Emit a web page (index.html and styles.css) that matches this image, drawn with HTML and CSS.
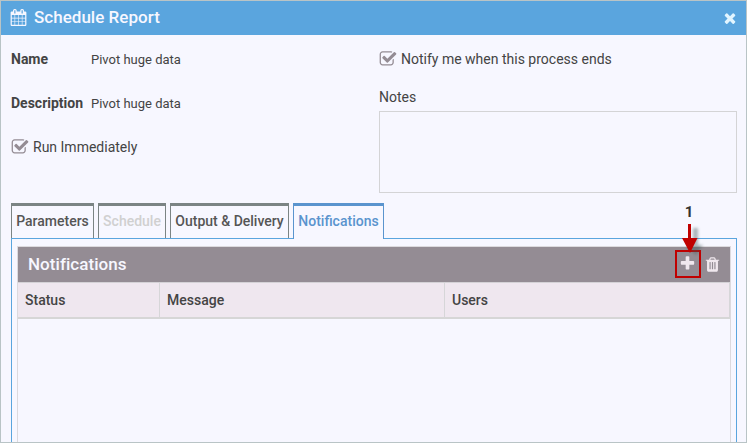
FILE: index.html
```html
<!DOCTYPE html>
<html lang="en">
<head>
<meta charset="utf-8">
<title>Schedule Report</title>
<link rel="stylesheet" href="styles.css">
</head>
<body>
<svg class="sprite" aria-hidden="true">
  <symbol id="check" viewBox="0 0 1792 1792"><path d="M1472 930v318q0 119-84.500 203.500t-203.500 84.500h-832q-119 0-203.500-84.500t-84.500-203.500v-832q0-119 84.500-203.500t203.500-84.500h832q63 0 117 25 15 7 18 23 3 17-9 29l-49 49q-10 10-23 10-3 0-9-2-23-6-45-6h-832q-66 0-113 47t-47 113v832q0 66 47 113t113 47h832q66 0 113-47t47-113v-254q0-13 9-22l64-64q10-10 23-10 6 0 12 3 20 8 20 29zm231-489l-814 814q-24 24-57 24t-57-24l-430-430q-24-24-24-57t24-57l110-110q24-24 57-24t57 24l263 263 647-647q24-24 57-24t57 24l110 110q24 24 24 57t-24 57z"/></symbol>
</svg>
<main class="dialog">
  <header class="titlebar">
    <svg class="icon-calendar" viewBox="0 0 1792 1792"><path d="M192 1664h288v-288h-288v288zm352 0h320v-288h-320v288zm-352-352h288v-320h-288v320zm352 0h320v-320h-320v320zm-352-384h288v-288h-288v288zm736 736h320v-288h-320v288zm-384-736h320v-288h-320v288zm768 736h288v-288h-288v288zm-384-352h320v-320h-320v320zm-352-864v-288q0-13-9.500-22.500t-22.500-9.500h-64q-13 0-22.500 9.500t-9.500 22.500v288q0 13 9.500 22.500t22.500 9.500h64q13 0 22.500-9.500t9.500-22.500zm736 864h288v-320h-288v320zm-384-384h320v-288h-320v288zm384 0h288v-288h-288v288zm32-480v-288q0-13-9.500-22.500t-22.500-9.500h-64q-13 0-22.500 9.500t-9.500 22.500v288q0 13 9.500 22.500t22.500 9.500h64q13 0 22.500-9.500t9.500-22.500zm384-64v1280q0 52-38 90t-90 38h-1408q-52 0-90-38t-38-90v-1280q0-52 38-90t90-38h128v-96q0-66 47-113t113-47h64q66 0 113 47t47 113v96h384v-96q0-66 47-113t113-47h64q66 0 113 47t47 113v96h128q52 0 90 38t38 90z"/></svg>
    <h1>Schedule Report</h1>
    <svg class="icon-close" viewBox="0 0 1792 1792"><path d="M1490 1322q0 40-28 68l-136 136q-28 28-68 28t-68-28l-294-294-294 294q-28 28-68 28t-68-28l-136-136q-28-28-28-68t28-68l294-294-294-294q-28-28-28-68t28-68l136-136q28-28 68-28t68 28l294 294 294-294q28-28 68-28t68 28l136 136q28 28 28 68t-28 68l-294 294 294 294q28 28 28 68z"/></svg>
  </header>
  <section class="form">
    <div class="form-left">
      <div class="field"><b>Name</b><span>Pivot huge data</span></div>
      <div class="field"><b>Description</b><span>Pivot huge data</span></div>
      <div class="option"><svg class="icon-check"><use href="#check"/></svg><span>Run Immediately</span></div>
    </div>
    <div class="form-right">
      <div class="option"><svg class="icon-check"><use href="#check"/></svg><span>Notify me when this process ends</span></div>
      <div class="notes-label">Notes</div>
      <div class="notes"></div>
    </div>
  </section>
  <nav class="tabs">
    <div class="tab parameters">Parameters</div>
    <div class="tab schedule">Schedule</div>
    <div class="tab output">Output &amp; Delivery</div>
    <div class="tab active">Notifications</div>
  </nav>
  <section class="panel">
    <div class="grid">
      <div class="grid-title">
        <h2>Notifications</h2>
        <div class="add">
          <svg class="icon-tool" viewBox="0 0 1792 1792"><path d="M1600 736v192q0 40-28 68t-68 28h-416v416q0 40-28 68t-68 28h-192q-40 0-68-28t-28-68v-416h-416q-40 0-68-28t-28-68v-192q0-40 28-68t68-28h416v-416q0-40 28-68t68-28h192q40 0 68 28t28 68v416h416q40 0 68 28t28 68z"/></svg>
          <div class="callout">
            <span>1</span>
            <svg class="arrow" viewBox="0 0 28 36">
              <path class="shadow" d="M13 5h5v17h5l-7 10-9-8 6-3z"/>
              <path class="red" d="M8 1h3v14h6.500L10 30 2 15h6z"/>
            </svg>
          </div>
        </div>
        <svg class="icon-tool" viewBox="0 0 1792 1792"><path d="M704 1376v-704q0-14-9-23t-23-9h-64q-14 0-23 9t-9 23v704q0 14 9 23t23 9h64q14 0 23-9t9-23zm256 0v-704q0-14-9-23t-23-9h-64q-14 0-23 9t-9 23v704q0 14 9 23t23 9h64q14 0 23-9t9-23zm256 0v-704q0-14-9-23t-23-9h-64q-14 0-23 9t-9 23v704q0 14 9 23t23 9h64q14 0 23-9t9-23zm-544-992h448l-48-117q-7-9-17-11h-317q-10 2-17 11zm928 32v64q0 14-9 23t-23 9h-96v948q0 83-47 143.500t-113 60.500h-832q-66 0-113-58.500t-47-141.500v-952h-96q-14 0-23-9t-9-23v-64q0-14 9-23t23-9h309l70-167q15-37 54-63t79-26h320q40 0 79 26t54 63l70 167h309q14 0 23 9t9 23z"/></svg>
      </div>
      <div class="columns">
        <div>Status</div>
        <div>Message</div>
        <div>Users</div>
      </div>
    </div>
  </section>
</main>
</body>
</html>
```
FILE: styles.css
```css
* { box-sizing: border-box; }
body {
  margin: 0;
  font: 14px/20px Roboto, "Liberation Sans", sans-serif;
  color: #444;
}
svg { display: block; flex: none; }
h1, h2 { margin: 0; font-size: 17px; font-weight: 500; color: #f7f7ff; }
.sprite { position: absolute; width: 0; height: 0; }

.dialog {
  width: 747px;
  height: 443px;
  border: 1px solid #b9c4c6;
  background: #f7f7ff;
  display: flex;
  flex-direction: column;
  overflow: hidden;
}
.titlebar {
  flex: none;
  height: 34px;
  padding: 0 8px 0 9px;
  display: flex;
  align-items: center;
  background: #5aa5de;
}
h1 { flex: 1; margin-left: 7px; line-height: 32px; height: 34px; letter-spacing: .02px; }
.icon-calendar { width: 17px; height: 17px; margin-bottom: 1px; fill: #f7f7ff; }
.icon-close { width: 16px; height: 16px; fill: #e2f5ff; }

.form {
  flex: none;
  height: 168px;
  display: flex;
  padding: 14px 9px 0 10px;
}
.form-left { width: 368px; display: flex; flex-direction: column; gap: 24px; }
.form-right { flex: 1; }
.field { display: flex; height: 20px; }
.field b { width: 80px; font-weight: 700; white-space: nowrap; }
.field span { font-size: 13px; line-height: 22px; }
.option { display: flex; align-items: center; height: 20px; gap: 4px; }
.icon-check { width: 18px; height: 18px; fill: #948c94; }
.notes-label { margin-top: 18px; }
.notes { margin-top: 4px; height: 82px; border: 1px solid #d4d4d6; }

.tabs { flex: none; height: 35px; display: flex; gap: 4px; padding-left: 10px; }
.tab {
  height: 35px;
  border: 1px solid #7b8484;
  border-top-width: 3px;
  border-bottom: 0;
  text-align: center;
  font-weight: 500;
  line-height: 31px;
  color: #555;
  white-space: nowrap;
}
.parameters { width: 83px; }
.schedule { width: 68px; color: #d0d0d0; }
.output { width: 119px; }
.tab.active {
  position: relative;
  width: 91px;
  height: 36px;
  border-color: #5a94ce;
  background: #f7f7ff;
  color: #5a94ce;
}

.panel {
  flex: 1;
  margin: 0 9px 0 10px;
  padding: 7px 5px 0;
  border: 1px solid #5aa5de;
  border-bottom: 0;
}
.grid { height: 100%; border: 1px solid #dcdade; border-bottom: 0; }
.grid-title {
  height: 35px;
  padding: 0 9px 0 10px;
  display: flex;
  align-items: center;
  background: #948c94;
}
h2 { flex: 1; line-height: 35px; letter-spacing: .05px; }
.icon-tool { width: 17px; height: 17px; fill: #f0e8ee; }
.add {
  position: relative;
  width: 26px;
  height: 28px;
  margin: 0 3px 1px 0;
  padding: 3px 0 0 2px;
  border: 2px solid #c00000;
}
.callout {
  position: absolute;
  left: 3px;
  bottom: 17px;
  width: 28px;
  color: #333;
  font-size: 15px;
  font-weight: 700;
}
.callout span { display: block; width: 18px; margin-bottom: 1px; text-align: center; line-height: 20px; }
.arrow { width: 28px; height: 36px; overflow: visible; }
.red { fill: #c00000; }
.shadow { fill: #3f5656; opacity: .42; filter: blur(1.6px); }

.columns {
  height: 37px;
  display: grid;
  grid-template-columns: 142px 285px 1fr;
  border-top: 1px solid #d4d2d6;
  border-bottom: 2px solid #d6d6d6;
  background: #efe7ef;
}
.columns div {
  padding-left: 7px;
  border-right: 1px solid #d6d6d8;
  font-weight: 500;
  line-height: 34px;
}
```
